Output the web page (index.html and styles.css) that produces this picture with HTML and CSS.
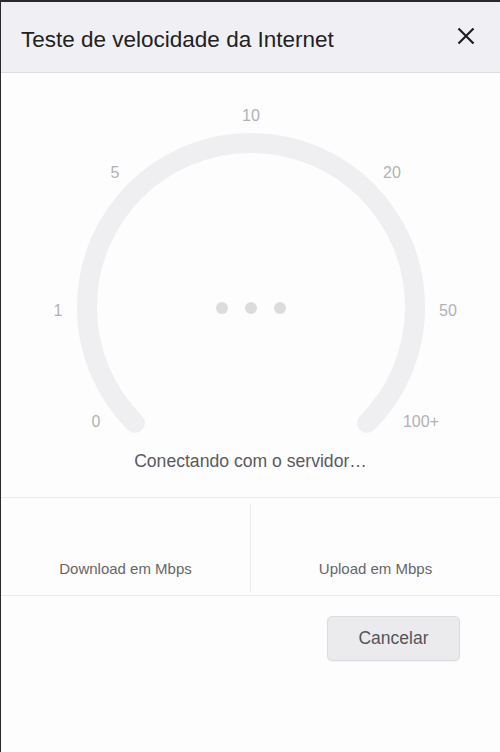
FILE: index.html
```html
<!DOCTYPE html>
<html lang="pt">
<head>
<meta charset="utf-8">
<title>Teste de velocidade da Internet</title>
<link rel="stylesheet" href="styles.css">
</head>
<body>
<div class="dialog">
  <header class="header">
    <h1 class="title">Teste de velocidade da Internet</h1>
    <button class="close" aria-label="Fechar">
      <svg width="18" height="18" viewBox="0 0 18 18"><path d="M1.5 1.5L16.5 16.5M16.5 1.5L1.5 16.5" stroke="#1e1e1e" stroke-width="2.2" stroke-linecap="butt"/></svg>
    </button>
  </header>
  <section class="gauge">
    <svg class="gauge-svg" width="499" height="367" viewBox="0 0 499 367">
      <path d="M134 350 A164 164 0 1 1 366 350" fill="none" stroke="#efeff1" stroke-width="20" stroke-linecap="round"/>
      <g class="ticks" text-anchor="middle">
        <text x="250" y="48">10</text>
        <text x="114" y="105">5</text>
        <text x="391" y="105">20</text>
        <text x="57" y="243">1</text>
        <text x="447" y="243">50</text>
        <text x="95" y="354">0</text>
        <text x="420" y="354">100+</text>
      </g>
      <g fill="#dcdcdf">
        <circle cx="221" cy="235" r="6"/>
        <circle cx="250" cy="235" r="6"/>
        <circle cx="279" cy="235" r="6"/>
      </g>
    </svg>
    <p class="status">Conectando com o servidor…</p>
  </section>
  <section class="stats">
    <div class="stat stat-first"><span class="stat-label">Download em Mbps</span></div>
    <div class="stat"><span class="stat-label">Upload em Mbps</span></div>
  </section>
  <footer class="footer">
    <button class="cancel">Cancelar</button>
  </footer>
</div>
</body>
</html>
```
FILE: styles.css
```css
html, body {
  margin: 0;
  padding: 0;
  background: #2a2a2a;
  height: 752px;
  overflow: hidden;
}
.dialog {
  margin: 2px 0 0 1px;
  width: 499px;
  height: 750px;
  background: #fdfdfd;
  font-family: "Liberation Sans", Arial, sans-serif;
  display: flex;
  flex-direction: column;
}
.header {
  height: 70px;
  background: #f0f0f4;
  border-bottom: 1px solid #dcdce0;
  display: flex;
  align-items: center;
  justify-content: space-between;
  padding: 0 25px 0 20px;
  box-sizing: content-box;
}
.title {
  margin: 0;
  font-size: 22.5px;
  font-weight: normal;
  color: #222;
  padding-top: 6px;
}
.close {
  border: none;
  background: none;
  padding: 0;
  width: 18px;
  height: 18px;
  display: flex;
  margin-top: -3px;
}
.gauge {
  display: flex;
  flex-direction: column;
  align-items: center;
  border-bottom: 1px solid #ececef;
}
.gauge-svg {
  display: block;
}
.ticks text {
  font-family: "Liberation Sans", Arial, sans-serif;
  font-size: 16px;
  fill: #b2b2b4;
}
.status {
  margin: 0;
  padding: 9px 0 24px;
  font-size: 17.6px;
  line-height: 24px;
  color: #5a5a5e;
}
.stats {
  display: flex;
  height: 97px;
  border-bottom: 1px solid #ececef;
}
.stat {
  flex: 1;
  display: flex;
  align-items: flex-end;
  justify-content: center;
  padding-bottom: 13px;
  margin: 6px 0 3px;
}
.stat-first {
  border-right: 1px solid #ececef;
}
.stat-label {
  font-size: 15px;
  line-height: 20px;
  color: #666669;
}
.footer {
  display: flex;
  justify-content: flex-end;
  padding: 20px 40px 0 0;
}
.cancel {
  width: 133px;
  height: 45px;
  background: #ebebee;
  border: 1px solid #dcdce0;
  border-radius: 5px;
  font-family: "Liberation Sans", Arial, sans-serif;
  font-size: 17.5px;
  color: #555558;
  box-shadow: 0 1px 1px rgba(0,0,0,0.04);
}
```
